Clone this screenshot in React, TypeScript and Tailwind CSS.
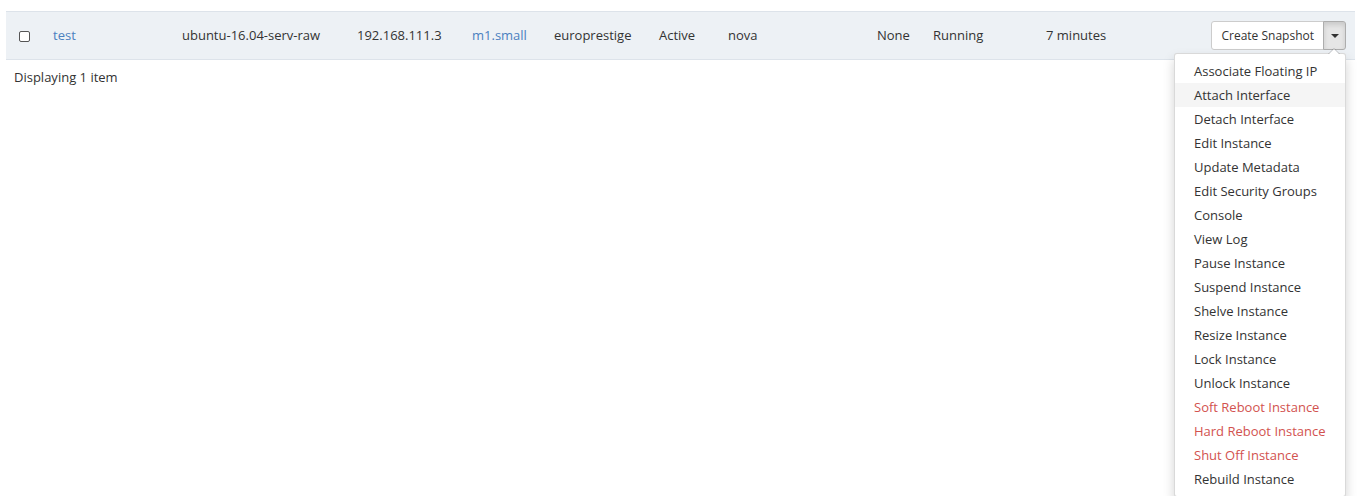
import { useState } from "react";

type Cell = { text: string; w: string; link?: boolean };

const CELLS: Cell[] = [
  { text: "test", w: "w-[129px]", link: true },
  { text: "ubuntu-16.04-serv-raw", w: "w-[175px]" },
  { text: "192.168.111.3", w: "w-[115px]" },
  { text: "m1.small", w: "w-[82px]", link: true },
  { text: "europrestige", w: "w-[105px]" },
  { text: "Active", w: "w-[69px]" },
  { text: "nova", w: "w-[149px]" },
  { text: "None", w: "w-[56px]" },
  { text: "Running", w: "w-[113px]" },
  { text: "7 minutes", w: "w-[120px]" },
];

const ACTIONS: { label: string; danger?: boolean }[] = [
  { label: "Associate Floating IP" },
  { label: "Attach Interface" },
  { label: "Detach Interface" },
  { label: "Edit Instance" },
  { label: "Update Metadata" },
  { label: "Edit Security Groups" },
  { label: "Console" },
  { label: "View Log" },
  { label: "Pause Instance" },
  { label: "Suspend Instance" },
  { label: "Shelve Instance" },
  { label: "Resize Instance" },
  { label: "Lock Instance" },
  { label: "Unlock Instance" },
  { label: "Soft Reboot Instance", danger: true },
  { label: "Hard Reboot Instance", danger: true },
  { label: "Shut Off Instance", danger: true },
  { label: "Rebuild Instance" },
];

function ActionsMenu() {
  const [hover, setHover] = useState("Attach Interface");

  return (
    <div className="relative flex">
      <button className="h-[29px] rounded-l-[3px] border border-[#cccccc] bg-white px-[9px] text-[12px] text-[#333]">
        Create Snapshot
      </button>
      <button className="-ml-px flex h-[29px] w-[23px] items-center justify-center rounded-r-[3px] border border-[#adadad] bg-[#e6e6e6] shadow-[inset_0_3px_5px_rgba(0,0,0,0.125)]">
        <span className="h-0 w-0 border-x-[4px] border-t-[4px] border-x-transparent border-t-[#333]" />
      </button>

      <ul className="absolute right-0 top-[32px] z-10 w-[172px] rounded-[3px] border border-[rgba(0,0,0,0.15)] bg-white py-[5px] shadow-[0_6px_12px_rgba(0,0,0,0.175)]">
        <span className="absolute -top-[6px] right-[5px] h-0 w-0 border-x-[6px] border-b-[6px] border-x-transparent border-b-[rgba(0,0,0,0.2)]" />
        <span className="absolute -top-[5px] right-[6px] h-0 w-0 border-x-[5px] border-b-[5px] border-x-transparent border-b-white" />
        {ACTIONS.map((a) => (
          <li
            key={a.label}
            onMouseEnter={() => setHover(a.label)}
            className={`h-[24px] whitespace-nowrap px-[19px] text-[13px] leading-[24px] ${
              a.danger ? "text-[#d2524f]" : "text-[#333]"
            } ${hover === a.label ? "bg-[#f5f5f5]" : ""}`}
          >
            {a.label}
          </li>
        ))}
      </ul>
    </div>
  );
}

export default function App() {
  return (
    <div className="min-h-[496px] bg-white pt-[11px] font-['Open_Sans',sans-serif] text-[13px] text-[#333]">
      <div className="ml-[6px] mr-[15px] flex h-[49px] items-center border-y border-[#dde3ea] bg-[#edf1f5]">
        <div className="flex w-[39px] pl-[13px] pt-px">
          <span className="h-[11px] w-[11px] rounded-[2px] border border-[#555] bg-white" />
        </div>
        {CELLS.map((c) => (
          <div key={c.text} className={`${c.w} px-[8px] pt-px`}>
            <span className={c.link ? "text-[#4b80c0]" : ""}>{c.text}</span>
          </div>
        ))}
        <div className="flex flex-1 justify-end pr-[9px]">
          <ActionsMenu />
        </div>
      </div>
      <div className="px-[14px] pt-[8px]">Displaying 1 item</div>
    </div>
  );
}
